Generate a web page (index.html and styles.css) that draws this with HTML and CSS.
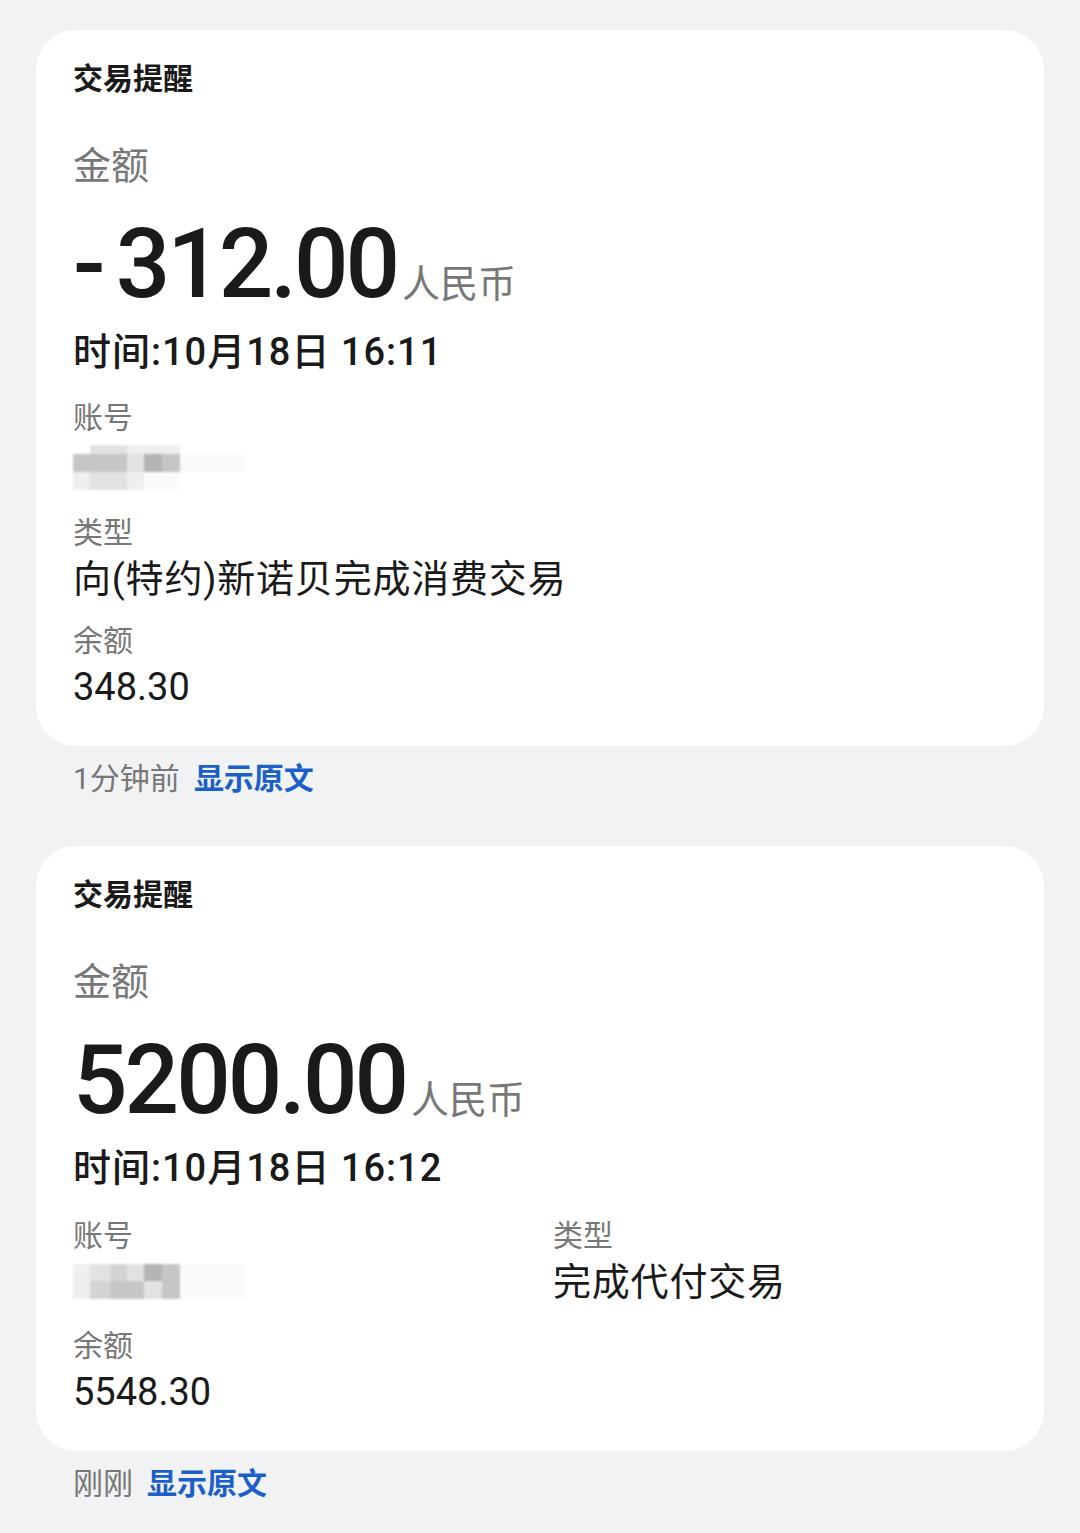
FILE: index.html
```html
<!DOCTYPE html>
<html lang="zh-CN">
  <head>
    <meta charset="UTF-8" />
    <meta name="viewport" content="width=device-width, initial-scale=1.0" />
    <title>交易提醒</title>
    <link rel="stylesheet" href="styles.css">
  </head>
  <body>
    <div class="page">
      <!-- 第一条短信 -->
      <div class="msg">
        <div class="card">
          <div class="card-title">交易提醒</div>
          <div class="amt-label">金额</div>
          <div class="amt">
            <span class="amt-num"><span class="sign">-</span>312.00</span>
            <span class="amt-unit">人民币</span>
          </div>
          <div class="time">时间:10月18日 16:11</div>
          <div class="fields">
            <div class="field">
              <div class="f-label">账号</div>
              <div class="f-value">
                <div class="mosaic m1">
                  <i class="c0"></i><i class="c2"></i><i class="c2"></i><i class="c1"></i><i class="c1"></i><i class="c1"></i><i class="c0"></i>
                  <i class="c4"></i><i class="c4"></i><i class="c4"></i><i class="c2"></i><i class="c5"></i><i class="c4"></i><i class="c6"></i>
                  <i class="c1"></i><i class="c2"></i><i class="c2"></i><i class="c1"></i><i class="c6"></i><i class="c6"></i><i class="c0"></i>
                </div>
              </div>
            </div>
            <div class="field">
              <div class="f-label">类型</div>
              <div class="f-value desc">向(特约)新诺贝完成消费交易</div>
            </div>
            <div class="field">
              <div class="f-label">余额</div>
              <div class="f-value">348.30</div>
            </div>
          </div>
        </div>
        <div class="meta"><span class="ago">1分钟前</span><a class="raw">显示原文</a></div>
      </div>

      <!-- 第二条短信 -->
      <div class="msg">
        <div class="card">
          <div class="card-title">交易提醒</div>
          <div class="amt-label">金额</div>
          <div class="amt">
            <span class="amt-num">5200.00</span>
            <span class="amt-unit">人民币</span>
          </div>
          <div class="time">时间:10月18日 16:12</div>
          <div class="fields two">
            <div class="field">
              <div class="f-label">账号</div>
              <div class="f-value">
                <div class="mosaic m2">
                  <i class="c1"></i><i class="c2"></i><i class="c3"></i><i class="c2"></i><i class="c5"></i><i class="c4"></i><i class="c6"></i>
                  <i class="c1"></i><i class="c3"></i><i class="c4"></i><i class="c4"></i><i class="c2"></i><i class="c4"></i><i class="c6"></i>
                </div>
              </div>
            </div>
            <div class="field">
              <div class="f-label">类型</div>
              <div class="f-value desc">完成代付交易</div>
            </div>
            <div class="field">
              <div class="f-label">余额</div>
              <div class="f-value">5548.30</div>
            </div>
          </div>
        </div>
        <div class="meta"><span class="ago">刚刚</span><a class="raw">显示原文</a></div>
      </div>
    </div>
  </body>
</html>
```

FILE: styles.css
```css
body {
  margin: 0;
  background-color: #f1f2f4;
  font-family: Roboto, "Noto Sans CJK SC", sans-serif;
  color: #1a1a1a;
}

.page {
  padding: 30px 36px 0;
}

.msg {
  margin-bottom: 47px;
}

.card {
  background-color: #fff;
  border-radius: 40px;
  padding: 29px 37px 33px;
}

.card-title {
  font-size: 30px;
  line-height: 40px;
  font-weight: 600;
}

.amt-label {
  margin-top: 43px;
  font-size: 38px;
  line-height: 48px;
  color: #777;
}

.amt {
  margin-top: 26px;
  display: flex;
  align-items: baseline;
}

.amt-num {
  font-size: 96px;
  line-height: 96px;
  font-weight: 500;
  letter-spacing: -3px;
}

.sign {
  margin-right: 13px;
}

.amt-unit {
  margin-left: 5px;
  font-size: 38px;
  color: #777;
}

.time {
  margin-top: 14px;
  font-size: 38px;
  line-height: 52px;
  font-weight: 500;
  letter-spacing: 1px;
}

.fields {
  margin-top: 20px;
  display: grid;
  grid-template-columns: 1fr;
  row-gap: 16px;
}

.fields.two {
  margin-top: 22px;
  grid-template-columns: 480px 1fr;
  row-gap: 10px;
}

.f-label {
  font-size: 30px;
  line-height: 40px;
  color: #777;
}

.f-value {
  font-size: 38px;
  line-height: 52px;
  height: 52px;
}

.desc {
  letter-spacing: 0.8px;
}

/* 打码的账号 */
.mosaic {
  display: grid;
  grid-template-columns: 17px 20px 17px 17px 18px 18px 65px;
  filter: blur(1.2px);
}

.m1 {
  grid-template-rows: 9px 18px 18px;
  margin-top: 7px;
}

.m2 {
  grid-template-rows: 17px 18px;
  margin-top: 8px;
}

.c0 { background-color: #fff; }
.c1 { background-color: #efefef; }
.c2 { background-color: #e2e2e2; }
.c3 { background-color: #d4d4d4; }
.c4 { background-color: #c6c6c6; }
.c5 { background-color: #b4b4b4; }
.c6 { background-color: #fafafa; }

.meta {
  margin-top: 13px;
  padding-left: 37px;
  font-size: 30px;
  line-height: 40px;
}

.ago {
  color: #777;
}

.raw {
  margin-left: 14px;
  color: #1b5fc8;
  font-weight: 600;
}
```
